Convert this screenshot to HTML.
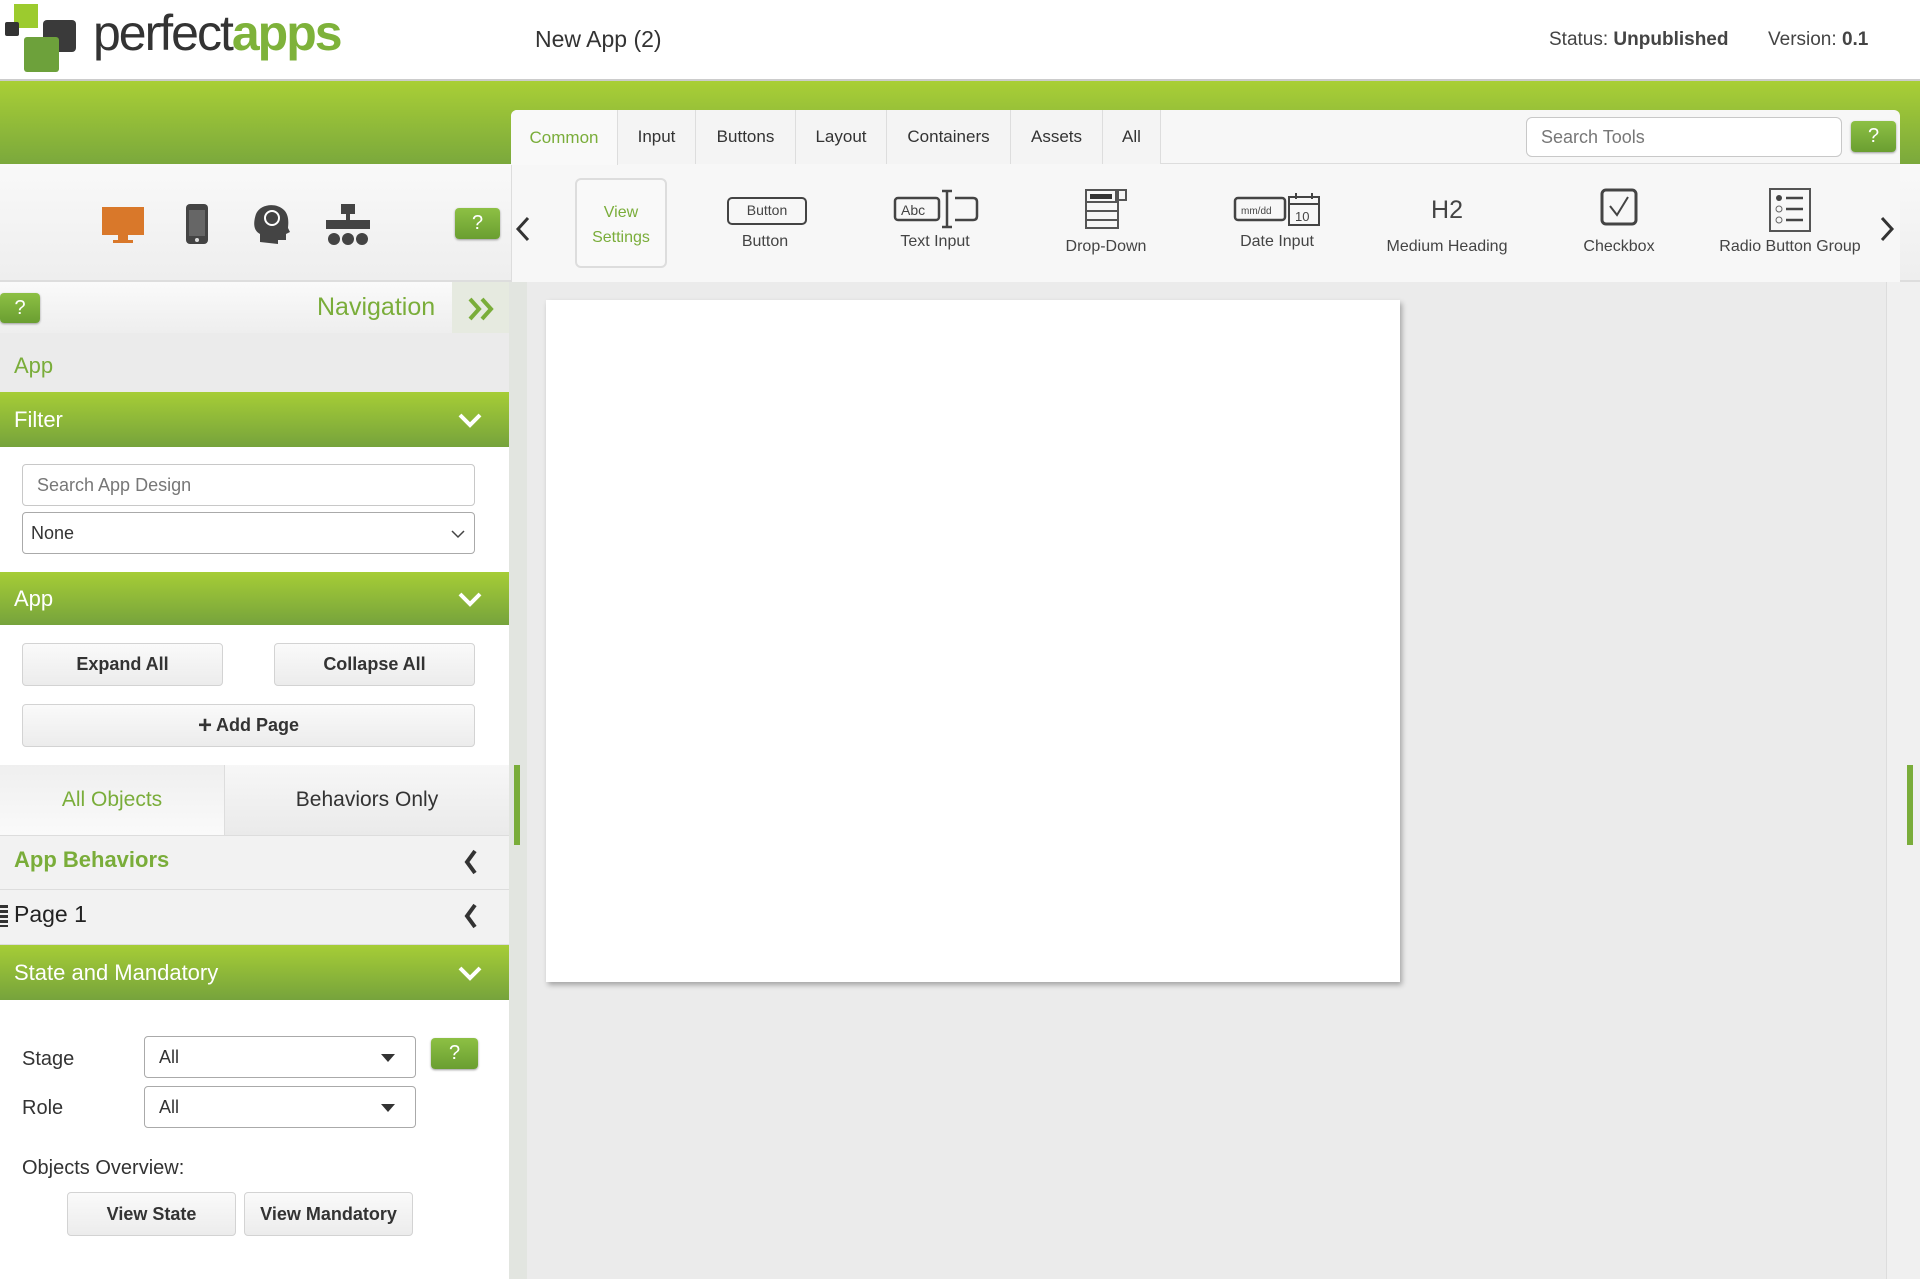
<!DOCTYPE html>
<html><head><meta charset="utf-8"><style>
*{box-sizing:border-box;margin:0;padding:0}
body{width:1920px;height:1279px;position:relative;overflow:hidden;background:#fff;font-family:"Liberation Sans",sans-serif;color:#333}
.a{position:absolute}
.gbar{background:linear-gradient(#a9cf36,#7aa83c)}
.hdr{position:absolute;left:0;width:509px;background:linear-gradient(#a6cd36,#76a33c);color:#fff;font-size:22px;padding-left:14px;display:flex;align-items:center}
.chev{position:absolute;right:26px;top:50%;margin-top:-9px}
.btn{position:absolute;background:linear-gradient(#fafafa,#ececec);border:1px solid #d3d3d3;border-radius:4px;font-weight:bold;font-size:18px;color:#333;display:flex;align-items:center;justify-content:center}
.help{position:absolute;background:linear-gradient(#8dc044,#6a9e31);border-radius:4px;color:#fff;font-size:20px;display:flex;align-items:center;justify-content:center;box-shadow:0 1px 2px #999}
.tab{position:absolute;top:110px;height:54px;border-right:1px solid #ddd;font-size:17px;display:flex;align-items:center;justify-content:center;background:#f4f4f4;color:#333}
.tool{position:absolute;text-align:center;font-size:16px;color:#444;width:160px}
.inp{position:absolute;border:1px solid #c8c8c8;border-radius:4px;background:#fff;font-size:18px;display:flex;align-items:center;padding-left:14px}
</style></head><body>
<!-- logo -->
<div class="a" style="left:14px;top:4px;width:24px;height:24px;background:#9ccb2e"></div>
<div class="a" style="left:5px;top:22px;width:14px;height:14px;background:#333;border-radius:2px"></div>
<div class="a" style="left:43px;top:20px;width:33px;height:32px;background:#3a3a3a;border-radius:4px"></div>
<div class="a" style="left:24px;top:37px;width:35px;height:35px;background:#6da13b;border-radius:3px"></div>
<div class="a" style="left:93px;top:4px;font-size:50px;letter-spacing:-2px;color:#333">perfect<span style="color:#7eb23a;font-weight:bold">apps</span></div>
<div class="a" style="left:535px;top:26px;font-size:23px;color:#333">New App (2)</div>
<div class="a" style="left:1549px;top:29px;font-size:19px;color:#444">Status: <b>Unpublished</b></div>
<div class="a" style="left:1768px;top:29px;font-size:19px;color:#444">Version: <b>0.1</b></div>
<div class="a" style="left:0;top:79px;width:1920px;height:2px;background:#ccc"></div>
<!-- green bar -->
<div class="a gbar" style="left:0;top:81px;width:1920px;height:84px"></div>
<!-- toolbar row -->
<div class="a" style="left:0;top:164px;width:1920px;height:118px;background:linear-gradient(#f9f9f9,#eeeeee);border-bottom:2px solid #ddd"></div>
<div class="a" style="left:511px;top:110px;width:1389px;height:172px;background:#f7f7f7;border-radius:6px 6px 0 0;border-left:1px solid #ddd"></div>
<div class="a" style="left:511px;top:163px;width:1389px;height:1px;background:#ddd"></div>
<div class="tab" style="left:511px;width:107px;color:#7aad3a;background:#f9f9f9;border-radius:6px 0 0 0;height:55px">Common</div>
<div class="tab" style="left:618px;width:78px">Input</div>
<div class="tab" style="left:696px;width:100px">Buttons</div>
<div class="tab" style="left:796px;width:91px">Layout</div>
<div class="tab" style="left:887px;width:124px">Containers</div>
<div class="tab" style="left:1011px;width:92px">Assets</div>
<div class="tab" style="left:1103px;width:58px">All</div>
<div class="inp" style="left:1526px;top:117px;width:316px;height:40px;color:#777;font-size:18px;border-radius:6px">Search Tools</div>
<div class="help" style="left:1851px;top:121px;width:45px;height:31px">?</div>
<!-- device icons -->
<svg class="a" style="left:100px;top:205px" width="46" height="40"><rect x="2" y="2" width="42" height="28" fill="#d9782a"/><rect x="18" y="30" width="10" height="5" fill="#d9782a"/><rect x="13" y="35" width="20" height="3" fill="#d9782a"/></svg>
<svg class="a" style="left:184px;top:202px" width="26" height="44"><rect x="2" y="2" width="22" height="40" rx="4" fill="#444"/><rect x="5" y="8" width="16" height="26" fill="#666"/><circle cx="13" cy="38" r="2" fill="#ddd"/></svg>
<svg class="a" style="left:252px;top:202px" width="40" height="44"><path d="M8 40 L8 32 C0 28 2 18 4 12 C8 2 24 0 32 8 C38 14 36 24 36 26 L38 30 L34 32 L34 38 L26 38 L26 42 Z" fill="#444"/><circle cx="20" cy="16" r="7" fill="none" stroke="#fff" stroke-width="2"/></svg>
<svg class="a" style="left:326px;top:204px" width="44" height="42"><rect x="15" y="0" width="14" height="10" fill="#444"/><rect x="20" y="10" width="4" height="6" fill="#444"/><rect x="0" y="16" width="44" height="9" fill="#444"/><circle cx="8" cy="35" r="6" fill="#444"/><circle cx="22" cy="35" r="6" fill="#444"/><circle cx="36" cy="35" r="6" fill="#444"/></svg>
<div class="help" style="left:455px;top:208px;width:45px;height:31px">?</div>
<svg class="a" style="left:515px;top:216px" width="16" height="26"><path d="M13 2 L3 13 L13 24" fill="none" stroke="#333" stroke-width="3"/></svg>
<svg class="a" style="left:1879px;top:216px" width="16" height="26"><path d="M3 2 L13 13 L3 24" fill="none" stroke="#333" stroke-width="3"/></svg>
<div class="a" style="left:575px;top:178px;width:92px;height:90px;border:2px solid #ddd;border-radius:6px;background:#f9f9f9;color:#7aad3a;font-size:16px;text-align:center;padding-top:20px;line-height:25px">View<br>Settings</div>
<!-- tools -->
<div class="a" style="left:727px;top:197px;width:80px;height:28px;border:2.5px solid #444;border-radius:5px;font-size:14px;text-align:center;line-height:23px;color:#444">Button</div>
<div class="tool" style="left:685px;top:233px">Button</div>
<svg class="a" style="left:893px;top:189px" width="86" height="40"><rect x="2" y="9" width="44" height="22" rx="3" fill="none" stroke="#444" stroke-width="2.5"/><text x="8" y="26" font-size="14" font-family="Liberation Sans" fill="#444">Abc</text><path d="M49 2 H59 M54 2 V38 M49 38 H59" stroke="#444" stroke-width="2.5"/><path d="M62 9 H80 Q84 9 84 13 V27 Q84 31 80 31 H62" fill="none" stroke="#444" stroke-width="2.5"/></svg>
<div class="tool" style="left:855px;top:233px">Text Input</div>
<svg class="a" style="left:1084px;top:188px" width="44" height="42"><rect x="2" y="2" width="32" height="38" fill="none" stroke="#555" stroke-width="2"/><rect x="6" y="6" width="22" height="5" fill="#333"/><rect x="32" y="2" width="10" height="10" fill="none" stroke="#555" stroke-width="2"/><path d="M2 14 H34 M2 23 H34 M2 32 H34" stroke="#555" stroke-width="2"/></svg>
<div class="tool" style="left:1026px;top:238px">Drop-Down</div>
<svg class="a" style="left:1233px;top:191px" width="90" height="36"><rect x="2" y="7" width="50" height="22" rx="3" fill="none" stroke="#444" stroke-width="2.5"/><text x="8" y="23" font-size="10" font-family="Liberation Sans" fill="#444">mm/dd</text><rect x="56" y="6" width="30" height="28" fill="none" stroke="#444" stroke-width="2"/><path d="M56 13 H86 M63 2 V8 M79 2 V8" stroke="#444" stroke-width="2"/><text x="62" y="30" font-size="13" font-family="Liberation Sans" fill="#444">10</text></svg>
<div class="tool" style="left:1197px;top:233px">Date Input</div>
<div class="tool" style="left:1367px;top:196px;font-size:25px;color:#444">H2</div>
<div class="tool" style="left:1367px;top:238px">Medium Heading</div>
<svg class="a" style="left:1600px;top:188px" width="38" height="38"><rect x="2" y="2" width="34" height="34" rx="4" fill="none" stroke="#444" stroke-width="3"/><path d="M10 18 L17 27 L28 9" fill="none" stroke="#444" stroke-width="2"/></svg>
<div class="tool" style="left:1539px;top:238px">Checkbox</div>
<svg class="a" style="left:1769px;top:188px" width="42" height="44"><rect x="1" y="1" width="40" height="42" fill="none" stroke="#555" stroke-width="2"/><circle cx="10" cy="10" r="3" fill="#444"/><circle cx="10" cy="21" r="3" fill="none" stroke="#666"/><circle cx="10" cy="32" r="3" fill="none" stroke="#666"/><path d="M17 10 H34 M17 21 H34 M17 32 H34" stroke="#444" stroke-width="2.5"/></svg>
<div class="tool" style="left:1710px;top:238px">Radio Button Group</div>
<!-- canvas -->
<div class="a" style="left:509px;top:282px;width:1411px;height:997px;background:#ebebeb"></div>
<div class="a" style="left:509px;top:282px;width:18px;height:997px;background:#e2e5e0"></div>
<div class="a" style="left:514px;top:765px;width:6px;height:80px;background:#7aad3a"></div>
<div class="a" style="left:1886px;top:282px;width:34px;height:997px;background:#f0f0f0;border-left:1px solid #ddd"></div>
<div class="a" style="left:1907px;top:765px;width:6px;height:80px;background:#7aad3a"></div>
<div class="a" style="left:546px;top:300px;width:854px;height:682px;background:#fff;box-shadow:2px 3px 5px rgba(0,0,0,.3)"></div>
<!-- left panel -->
<div class="a" style="left:0;top:282px;width:509px;height:997px;background:#fff"></div>
<div class="a" style="left:0;top:282px;width:509px;height:51px;background:linear-gradient(#fafafa,#eeeeee)"></div>
<div class="help" style="left:0;top:293px;width:40px;height:30px">?</div>
<div class="a" style="left:317px;top:293px;font-size:25px;color:#7aad3a">Navigation</div>
<div class="a" style="left:452px;top:282px;width:57px;height:51px;background:#e6eae0"></div>
<svg class="a" style="left:467px;top:296px" width="28" height="26"><path d="M3 3 L12 13 L3 23 M15 3 L24 13 L15 23" fill="none" stroke="#7aad3a" stroke-width="4"/></svg>
<div class="a" style="left:0;top:333px;width:509px;height:59px;background:#ebebeb;color:#7aad3a;font-size:22px;padding:20px 0 0 14px">App</div>
<div class="hdr" style="top:392px;height:55px">Filter<svg class="chev" width="26" height="18"><path d="M3 4 L13 14 L23 4" fill="none" stroke="#fff" stroke-width="4"/></svg></div>
<div class="inp" style="left:22px;top:464px;width:453px;height:42px;color:#777">Search App Design</div>
<div class="inp" style="left:22px;top:512px;width:453px;height:42px;padding-left:8px;border-color:#aaa">None<svg style="position:absolute;right:8px;top:15px" width="16" height="12"><path d="M2 3 L8 9 L14 3" fill="none" stroke="#444" stroke-width="1.5"/></svg></div>
<div class="hdr" style="top:572px;height:53px">App<svg class="chev" width="26" height="18"><path d="M3 4 L13 14 L23 4" fill="none" stroke="#fff" stroke-width="4"/></svg></div>
<div class="btn" style="left:22px;top:643px;width:201px;height:43px">Expand All</div>
<div class="btn" style="left:274px;top:643px;width:201px;height:43px">Collapse All</div>
<div class="btn" style="left:22px;top:704px;width:453px;height:43px"><span style="font-size:24px;margin-right:4px">+</span>Add Page</div>
<div class="a" style="left:0;top:765px;width:224px;height:70px;background:linear-gradient(#efefef,#fafafa);color:#7aad3a;font-size:21px;display:flex;align-items:center;justify-content:center">All Objects</div>
<div class="a" style="left:224px;top:765px;width:285px;height:70px;background:linear-gradient(#f7f7f7,#eaeaea);border-left:1px solid #ddd;font-size:21px;display:flex;align-items:center;justify-content:center">Behaviors Only</div>
<div class="a" style="left:0;top:835px;width:509px;height:55px;background:#f2f2f2;border-top:1px solid #ddd;border-bottom:1px solid #ddd;color:#7aad3a;font-weight:bold;font-size:22px;padding:11px 0 0 14px">App Behaviors<svg style="position:absolute;right:30px;top:13px" width="16" height="26"><path d="M12 2 L4 13 L12 24" fill="none" stroke="#333" stroke-width="4"/></svg></div>
<div class="a" style="left:0;top:890px;width:509px;height:55px;background:#f2f2f2;border-bottom:1px solid #ddd;font-size:23px;padding:11px 0 0 14px;color:#222">Page 1<div style="position:absolute;left:0;top:15px;width:8px;height:22px;background:repeating-linear-gradient(#333 0 3px,transparent 3px 5px)"></div><svg style="position:absolute;right:30px;top:13px" width="16" height="26"><path d="M12 2 L4 13 L12 24" fill="none" stroke="#333" stroke-width="4"/></svg></div>
<div class="hdr" style="top:945px;height:55px">State and Mandatory<svg class="chev" width="26" height="18"><path d="M3 4 L13 14 L23 4" fill="none" stroke="#fff" stroke-width="4"/></svg></div>
<div class="a" style="left:22px;top:1048px;font-size:20px">Stage</div>
<div class="a" style="left:22px;top:1097px;font-size:20px">Role</div>
<div class="inp" style="left:144px;top:1036px;width:272px;height:42px;font-size:18px;border-color:#aaa">All<svg style="position:absolute;right:20px;top:17px" width="14" height="8"><path d="M0 0 H14 L7 8Z" fill="#333"/></svg></div>
<div class="inp" style="left:144px;top:1086px;width:272px;height:42px;font-size:18px;border-color:#aaa">All<svg style="position:absolute;right:20px;top:17px" width="14" height="8"><path d="M0 0 H14 L7 8Z" fill="#333"/></svg></div>
<div class="help" style="left:431px;top:1038px;width:47px;height:31px">?</div>
<div class="a" style="left:22px;top:1157px;font-size:20px">Objects Overview:</div>
<div class="btn" style="left:67px;top:1192px;width:169px;height:44px">View State</div>
<div class="btn" style="left:244px;top:1192px;width:169px;height:44px">View Mandatory</div>
</body></html>
